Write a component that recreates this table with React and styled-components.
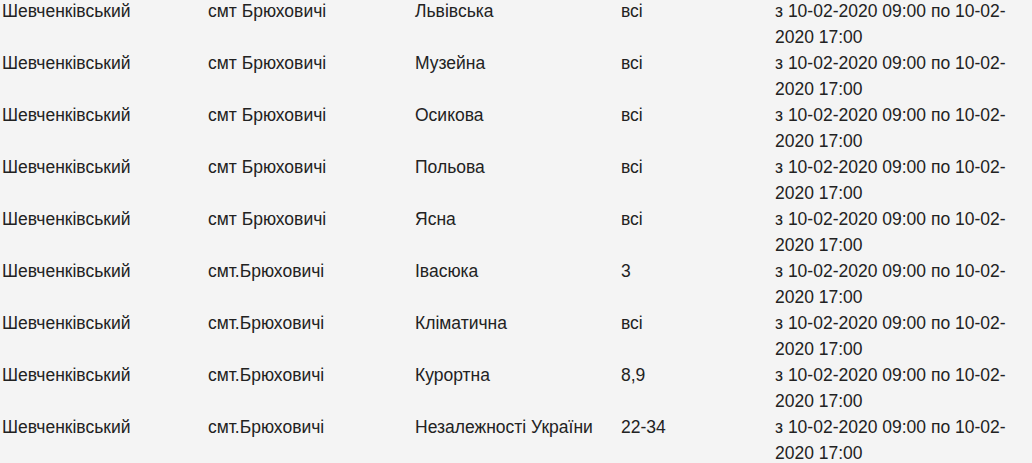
import * as React from 'react'
import styled, {createGlobalStyle} from 'styled-components'

const GlobalStyle = createGlobalStyle`
  html, body{
    margin: 0;
    padding: 0;
    background: #f4f4f4;
  }
  body{
    font-family: "Liberation Sans", Arial, sans-serif;
    font-size: 17.5px;
    color: #222;
  }
`

const rows = [
  ['Шевченківський', 'смт Брюховичі', 'Львівська', 'всі'],
  ['Шевченківський', 'смт Брюховичі', 'Музейна', 'всі'],
  ['Шевченківський', 'смт Брюховичі', 'Осикова', 'всі'],
  ['Шевченківський', 'смт Брюховичі', 'Польова', 'всі'],
  ['Шевченківський', 'смт Брюховичі', 'Ясна', 'всі'],
  ['Шевченківський', 'смт.Брюховичі', 'Івасюка', '3'],
  ['Шевченківський', 'смт.Брюховичі', 'Кліматична', 'всі'],
  ['Шевченківський', 'смт.Брюховичі', 'Курортна', '8,9'],
  ['Шевченківський', 'смт.Брюховичі', 'Незалежності України', '22-34'],
]

const period = 'з 10-02-2020 09:00 по 10-02-2020 17:00'

export default function App(){
  return (
    <>
      <GlobalStyle/>
      <Page>
        <Table>
          {rows.map((row, key) => (
            <Row key={key}>
              {row.map((cell, i) => <Cell key={i}>{cell}</Cell>)}
              <Cell>{period}</Cell>
            </Row>
          ))}
        </Table>
      </Page>
    </>
  )
}

const Page = styled.div`
  width: 1032px;
  height: 463px;
  overflow: hidden;
`

const Table = styled.div`
  display: flex;
  flex-direction: column;
  margin-top: -2px;
  padding-left: 2px;
`

const Row = styled.div`
  display: grid;
  grid-template-columns: 206px 207px 206px 154px 245px;
  height: 52px;
`

const Cell = styled.div`
  line-height: 26px;
  white-space: normal;
`
